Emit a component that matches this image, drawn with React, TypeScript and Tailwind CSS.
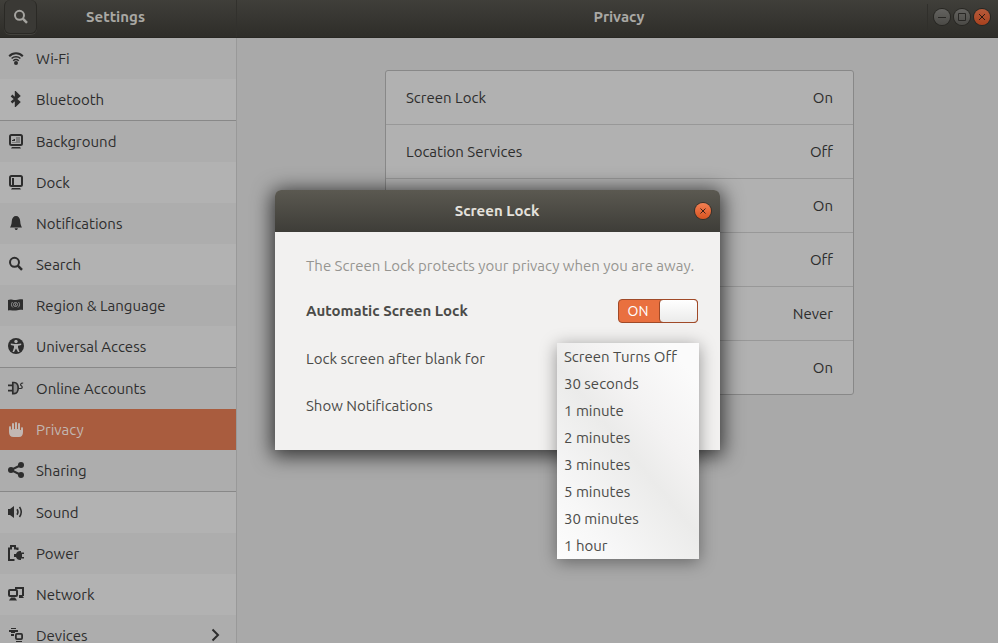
import { useState } from 'react';
import type { ReactNode } from 'react';
import clsx from 'clsx';

const stroke = { fill: 'none', stroke: 'currentColor', strokeWidth: 2 };

const icons: { [key: string]: ReactNode } = {
  wifi: (
    <>
      <circle cx="8" cy="13" r="2" />
      <path d="M1.2 6.2C5 2.2 11 2.2 14.8 6.2" {...stroke} />
      <path d="M3.6 8.5C6 6.3 10 6.3 12.4 8.5" {...stroke} strokeWidth="1.5" />
      <path d="M5.2 10.7C6.8 9.3 9.2 9.3 10.8 10.7" {...stroke} strokeWidth="1.5" />
    </>
  ),
  bluetooth: <path d="M3.5 4.5L11 11L8 14V2L11 5L3.5 11.5" {...stroke} strokeWidth="2.4" />,
  background: (
    <>
      <rect x="2" y="2" width="12" height="10" rx="1.5" {...stroke} />
      <path d="M8 4h4v6H4V9h4z" opacity="0.35" />
      <path d="M7 4.5V8H4V7h1.5V6H7z" />
      <path d="M4 14h8l1 1.5H3z" />
    </>
  ),
  dock: (
    <>
      <rect x="2" y="2" width="12" height="10" rx="1.5" {...stroke} />
      <path d="M4 4h2v7H4z" />
      <path d="M4 14h8l1 1.5H3z" />
    </>
  ),
  notifications: (
    <>
      <path d="M8 1C10.5 1 12 3 12.2 6C12.4 9.5 13 10.5 14 12.5H2C3 10.5 3.6 9.5 3.8 6C4 3 5.5 1 8 1Z" />
      <path d="M6.5 13.2h3.5L9 15H7.5z" />
    </>
  ),
  search: (
    <>
      <circle cx="6.5" cy="6.3" r="4.5" {...stroke} />
      <path d="M9.8 9.6L14 13.8" {...stroke} strokeWidth="2.5" />
    </>
  ),
  region: (
    <>
      <path d="M0 3C3 1.5 5 3.5 8 3S13 1.8 15 2.5V13C13 12.3 11 13 8 13.5S3 12.5 0 13.5Z" />
      <g fill="none" stroke="#9a9a9a" strokeWidth="0.9">
        <circle cx="7.5" cy="7.5" r="2" />
        <path d="M4.5 5C3 6.500 3 9 5 10.500M10.500 5C12 6.500 12 9 10 10.500" />
        <path d="M7.5 6.500v2" />
      </g>
    </>
  ),
  access: (
    <>
      <circle cx="8" cy="8" r="8" />
      <g fill="#b2b2b2">
        <circle cx="8" cy="3.5" r="1.7" />
        <path d="M2.8 5.5L6.5 6h3L13.2 5.5V7L10 7.8V9.5L11.5 14H10L8 10.5L6 14H4.5L6 9.5V7.8L2.8 7Z" />
      </g>
    </>
  ),
  accounts: (
    <>
      <path d="M0 4.5h4v1.8H0zM0 9.8h4v1.8H0z" />
      <path
        d="M4.8 2.5H6C9 2.5 10.2 5.5 10.2 8S9 13.7 6 13.7H4.8Z"
        fillOpacity="0.25"
        stroke="currentColor"
        strokeWidth="1.7"
      />
      <path d="M10.5 8.5H12.5C14.8 8.5 14.5 6.3 13.3 5.7S12.2 3 15.2 3" {...stroke} strokeWidth="1.2" />
    </>
  ),
  privacy: (
    <path d="M1 6.5Q1 5 2 5T3 6.5V8.5H4V3Q4 2 5 2T6 3V8H7V2Q7 1 8 1T9 2V8H10V3Q10 2 11 2T12 3V9H13V7.5Q13 6 14 6T15 7.5V11Q15 16 11 16H5.5Q1 16 1 11Z" />
  ),
  sharing: (
    <>
      <circle cx="3" cy="8" r="3" />
      <circle cx="13" cy="3" r="3" />
      <circle cx="13" cy="13" r="3" />
      <path d="M13 3L3 8L13 13" {...stroke} />
    </>
  ),
  sound: (
    <>
      <path d="M0 5h2L6 2V14L2 11H0Z" />
      <path d="M9 5.2Q11 8 9 10.8" {...stroke} strokeWidth="1.5" />
      <path d="M11.5 3Q15 8 11.5 13" {...stroke} strokeWidth="1.5" />
    </>
  ),
  power: (
    <>
      <path d="M6.5 15H1V3.5H3V1H7V3.5H9.5V5" {...stroke} />
      <path d="M8 9Q9 6 12 6H13V7.5H16V9H14V12H16V13.5H13V15H12Q9 15 8 12H6V9Z" />
    </>
  ),
  network: (
    <>
      <path d="M7 3V1H16V10H14.5L16 12H11V9H14V3Z" />
      <rect x="1" y="4" width="8" height="6" rx="1" {...stroke} />
      <path d="M3 11.5H7L9 14.5H1Z" />
    </>
  ),
  devices: (
    <>
      <path d="M3 1H8V2H3zM1 3H10V5H7V6H3V5H1zM3 7H6V9H3z" />
      <rect x="7.9" y="6.9" width="6.2" height="5.2" rx="1" {...stroke} strokeWidth="1.8" />
      <path d="M8 14h6v1H8z" />
    </>
  ),
};

const groups = [
  [
    { name: 'Wi-Fi', icon: 'wifi' },
    { name: 'Bluetooth', icon: 'bluetooth', shaded: true },
  ],
  [
    { name: 'Background', icon: 'background' },
    { name: 'Dock', icon: 'dock', shaded: true },
    { name: 'Notifications', icon: 'notifications' },
    { name: 'Search', icon: 'search', shaded: true },
    { name: 'Region & Language', icon: 'region' },
    { name: 'Universal Access', icon: 'access', shaded: true },
  ],
  [
    { name: 'Online Accounts', icon: 'accounts' },
    { name: 'Privacy', icon: 'privacy' },
    { name: 'Sharing', icon: 'sharing' },
  ],
  [
    { name: 'Sound', icon: 'sound', shaded: true },
    { name: 'Power', icon: 'power' },
    { name: 'Network', icon: 'network', shaded: true },
    { name: 'Devices', icon: 'devices', more: true },
  ],
];

const privacyRows = [
  { name: 'Screen Lock', value: 'On' },
  { name: 'Location Services', value: 'Off' },
  { value: 'On' },
  { value: 'Off' },
  { value: 'Never' },
  { value: 'On' },
];

const delays = [
  'Screen Turns Off',
  '30 seconds',
  '1 minute',
  '2 minutes',
  '3 minutes',
  '5 minutes',
  '30 minutes',
  '1 hour',
];

const Icon = ({ name }: { name: string }) => (
  <svg className="size-4 shrink-0" viewBox="0 0 16 16" fill="currentColor" aria-hidden="true">
    {icons[name]}
  </svg>
);

const WindowButton = ({ label, close, path }: { label: string; close?: boolean; path: string }) => (
  <button
    type="button"
    aria-label={label}
    className={clsx(
      'size-4 rounded-full shadow-[0_0_0_1px_#272622]',
      close
        ? 'bg-linear-to-b from-[#b65a3a] to-[#a9411d] text-[#2a1a12]'
        : 'bg-linear-to-b from-[#646360] to-[#4b4a46] text-[#282724]',
    )}
  >
    <svg className="size-4" viewBox="0 0 16 16" fill="none" stroke="currentColor">
      <path d={path} />
    </svg>
  </button>
);

const Header = () => (
  <header className="flex h-[38px] shrink-0 border-b border-[#292824] bg-linear-to-b from-[#403f3a] to-[#2e2d29] text-[#a9a8a4]">
    <div className="flex w-[237px] shrink-0 items-start border-r border-[#32312d]">
      <button
        type="button"
        aria-label="Search"
        className="ml-1 flex h-[34px] w-[33px] items-center justify-center rounded-md border border-t-0 border-[#2a2925] bg-[#3a3935] text-[#a5a4a0] shadow-[0_1px_0_#43423d]"
      >
        <Icon name="search" />
      </button>
      <h1 className="flex-1 pt-[7px] pr-[42px] text-center font-bold">Settings</h1>
    </div>
    <div className="flex flex-1 items-start">
      <h2 className="flex-1 pt-[7px] pl-[74px] text-center font-bold">Privacy</h2>
      <div className="mt-1 flex h-[26px] items-center gap-1 border-l border-[#302f2b] pr-2 pl-1.5">
        <WindowButton label="Minimize" path="M4 8.5h8" />
        <WindowButton label="Maximize" path="M4.5 4.5h7v7h-7z" />
        <WindowButton label="Close" close path="M5 5l6 6M11 5l-6 6" />
      </div>
    </div>
  </header>
);

const Sidebar = ({ active, onSelect }: { active: string; onSelect: (name: string) => void }) => (
  <nav className="w-[237px] shrink-0 overflow-hidden border-r border-[#999] bg-[#adadad]">
    {groups.map((group, index) => (
      <ul key={index} className={clsx(index > 0 && 'border-t border-[#888]')}>
        {group.map((item) => (
          <li key={item.name}>
            <button
              type="button"
              onClick={() => onSelect(item.name)}
              className={clsx(
                'flex h-[41px] w-full items-start gap-3 px-2 pt-3 text-left',
                item.name === active ? 'bg-[#a95c3e] text-[#c2b7b2]' : 'text-[#2d2d2d]',
                item.name !== active && item.shaded && 'bg-[#b2b2b2]',
              )}
            >
              <Icon name={item.icon} />
              <span className="flex-1 leading-[18px]">{item.name}</span>
              {item.more && (
                <svg className="mr-[7px] h-4 w-3" viewBox="0 0 12 16" fill="none" stroke="currentColor" strokeWidth="2">
                  <path d="M3.5 2.5L9 8L3.5 13.5" />
                </svg>
              )}
            </button>
          </li>
        ))}
      </ul>
    ))}
  </nav>
);

const ScreenLockDialog = () => {
  const [locked, setLocked] = useState(true);
  const [delay, setDelay] = useState('');

  return (
    <section
      role="dialog"
      aria-labelledby="dialog-title"
      className="w-[445px] rounded-t-md text-[#4b4b48] shadow-[0_3px_20px_3px_rgba(0,0,0,0.7)]"
    >
      <div className="flex h-[42px] items-center rounded-t-md bg-linear-to-b from-[#5b5951] to-[#3e3d38] pr-[9px] pl-6 text-[#e4e1dc]">
        <h2 id="dialog-title" className="flex-1 text-center font-bold">
          Screen Lock
        </h2>
        <button
          type="button"
          aria-label="Close dialog"
          className="size-4 rounded-full bg-linear-to-b from-[#f27f52] to-[#d9541f] text-[#3b2119] shadow-[0_0_0_1px_#3a3029]"
        >
          <svg className="size-4" viewBox="0 0 16 16" fill="none" stroke="currentColor">
            <path d="M5.5 5.5l5 5M10.5 5.5l-5 5" />
          </svg>
        </button>
      </div>
      <div className="h-[218px] bg-[#f2f1f0] pt-6 pr-[22px] pl-[31px]">
        <p className="whitespace-nowrap text-[#969591]">The Screen Lock protects your privacy when you are away.</p>
        <div className="mt-[23px] flex h-6 items-center justify-between font-bold">
          <label htmlFor="auto-lock">Automatic Screen Lock</label>
          <span
            className={clsx(
              'relative flex h-6 w-20 items-center rounded border border-[#a04a28] text-sm font-normal text-white',
              locked ? 'bg-[#e9703f]' : 'flex-row-reverse bg-[#b5b3b0]',
            )}
          >
            <span className="flex-1 pr-0.5 text-center" aria-hidden="true">
              {locked ? 'ON' : 'OFF'}
            </span>
            <span className="-my-px -mr-px h-6 w-[39px] rounded border border-[#a04a28] bg-linear-to-b from-white to-[#ebebea]" />
            <input
              id="auto-lock"
              type="checkbox"
              role="switch"
              className="absolute inset-0 size-full opacity-0"
              checked={locked}
              onChange={(e) => setLocked(e.target.checked)}
            />
          </span>
        </div>
        <div className="relative mt-6 flex h-6 items-center">
          <label htmlFor="delay">Lock screen after blank for</label>
          <select
            id="delay"
            size={8}
            value={delay}
            onChange={(e) => setDelay(e.target.value)}
            className="absolute -top-1 -right-px z-10 h-[216px] w-[142px] appearance-none overflow-hidden bg-[linear-gradient(50deg,#fdfdfd_0%,#f7f7f7_20%,#ebebea_50%,#f3f2f2_65%,#fbfbfb_90%)] shadow-[0_3px_16px_rgba(0,0,0,0.4)]"
          >
            {delays.map((item) => (
              <option
                key={item}
                value={item}
                className="h-[27px] px-[7px] pt-[5px] pb-[3px] leading-[19px] text-[#4b4b48] checked:bg-transparent checked:text-[#4b4b48] hover:bg-black/5"
              >
                {item}
              </option>
            ))}
          </select>
        </div>
        <p className="mt-6 leading-[22px]">Show Notifications</p>
      </div>
    </section>
  );
};

const App = () => {
  const [active, setActive] = useState('Privacy');

  return (
    <div className="relative flex h-screen flex-col overflow-hidden bg-[#a9a9a9] font-['Ubuntu','Noto_Sans',sans-serif] text-[15px] leading-5 text-[#2d2d2d]">
      <Header />
      <div className="flex min-h-0 flex-1">
        <Sidebar active={active} onSelect={setActive} />
        <main className="flex flex-1 items-start justify-center pt-8 pl-1">
          <ul className="w-[469px] divide-y divide-[#989898] rounded-[3px] border border-[#888] bg-[#b1b1b1]">
            {privacyRows.map(({ name, value }, index) => (
              <li key={index} className="flex h-[54px] items-center justify-between px-5 last:h-[53px]">
                <span>{name}</span>
                <span>{value}</span>
              </li>
            ))}
          </ul>
        </main>
      </div>
      <div className="absolute inset-0 flex items-center justify-center pr-[3px] pb-[3px]">
        <ScreenLockDialog />
      </div>
    </div>
  );
};

export default App;
